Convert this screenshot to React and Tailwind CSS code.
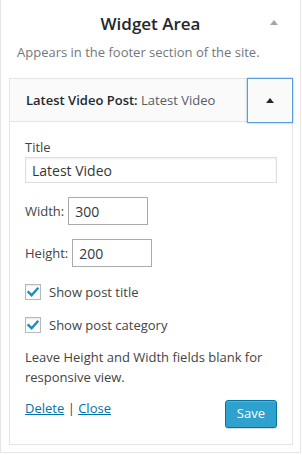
import { useState } from 'react'

function Check({ checked, onChange, label }) {
  return (
    <label className="flex items-center gap-2 cursor-pointer">
      <span
        onClick={onChange}
        className="flex h-4 w-4 items-center justify-center border border-[#b4b9be] bg-white shadow-[inset_0_1px_2px_rgba(0,0,0,0.1)]"
      >
        {checked && (
          <svg width="14" height="14" viewBox="0 0 14 14">
            <path d="M2.5 7.2 L5.6 10.2 L11.5 3.6" fill="none" stroke="#1e8cbe" strokeWidth="2.4" strokeLinecap="square" />
          </svg>
        )}
      </span>
      <span className="text-[13px] leading-5 text-[#444]">{label}</span>
    </label>
  )
}

export default function App() {
  const [title, setTitle] = useState('Latest Video')
  const [width, setWidth] = useState('300')
  const [height, setHeight] = useState('200')
  const [showTitle, setShowTitle] = useState(true)
  const [showCat, setShowCat] = useState(true)

  return (
    <div className="h-[455px] w-[302px] bg-white font-['Open_Sans',sans-serif]">
      <div className="w-[301px] border-x border-b border-[#e5e5e5] pb-[7px]">
        <div className="relative pt-3">
          <h2 className="text-center text-[17px] font-semibold leading-6 text-[#23282d]">Widget Area</h2>
          <span className="absolute right-[22px] top-[20px] h-0 w-0 border-x-[4px] border-b-[5px] border-x-transparent border-b-[#a0a5aa]" />
        </div>
        <p className="mt-1.5 pl-4 text-[13px] leading-5 text-[#72777c]">Appears in the footer section of the site.</p>

        <div className="ml-2 mt-4 w-[284px] border border-[#e5e5e5] bg-white">
          <div className="flex h-[43px] items-center bg-[#fafafa] border-b border-[#e5e5e5]">
            <h3 className="flex-1 pl-4 text-[13px] leading-5 text-[#23282d]">
              <span className="font-semibold">Latest Video Post:</span>{' '}
              <span className="text-[#555d66]">Latest Video</span>
            </h3>
            <button className="-mr-px -mt-px flex h-[45px] w-[46px] items-center justify-center self-start border border-[#5b9dd9] bg-[#fafafa] shadow-[0_0_2px_rgba(30,140,190,0.6)]">
              <span className="h-0 w-0 border-x-[4px] border-b-[5px] border-x-transparent border-b-[#23282d]" />
            </button>
          </div>

          <div className="px-[15px] pb-4 pt-[15px] text-[13px] text-[#444]">
            <label className="block leading-5">Title</label>
            <input
              value={title}
              onChange={(e) => setTitle(e.target.value)}
              className="block h-[26px] w-[252px] border border-[#ddd] px-[6px] text-[14px] text-[#32373c] shadow-[inset_0_1px_2px_rgba(0,0,0,0.07)] outline-none"
            />

            <div className="mt-[14px] flex items-center">
              <span className="leading-5">Width:</span>
              <input
                value={width}
                onChange={(e) => setWidth(e.target.value)}
                className="ml-1 h-[28px] w-[80px] border border-[#aaa] px-[6px] text-[14px] text-[#32373c] outline-none"
              />
            </div>

            <div className="mt-[14px] flex items-center">
              <span className="leading-5">Height:</span>
              <input
                value={height}
                onChange={(e) => setHeight(e.target.value)}
                className="ml-1 h-[28px] w-[80px] border border-[#aaa] px-[6px] text-[14px] text-[#32373c] outline-none"
              />
            </div>

            <div className="mt-[15px]">
              <Check checked={showTitle} onChange={() => setShowTitle(!showTitle)} label="Show post title" />
            </div>
            <div className="mt-[13px]">
              <Check checked={showCat} onChange={() => setShowCat(!showCat)} label="Show post category" />
            </div>

            <p className="mt-[12px] leading-5">Leave Height and Width fields blank for responsive view.</p>

            <div className="mt-[11px] flex items-start justify-between">
              <div className="leading-5">
                <a href="#" className="text-[#0073aa] underline">Delete</a>
                {' | '}
                <a href="#" className="text-[#0073aa] underline">Close</a>
              </div>
              <button className="mt-[2px] h-[28px] rounded-[3px] border border-[#0074a2] bg-[#2ea2cc] px-[11px] text-[13px] text-white shadow-[inset_0_1px_0_rgba(120,200,230,0.5),0_1px_0_rgba(0,0,0,0.15)]">
                Save
              </button>
            </div>
          </div>
        </div>
      </div>
    </div>
  )
}
